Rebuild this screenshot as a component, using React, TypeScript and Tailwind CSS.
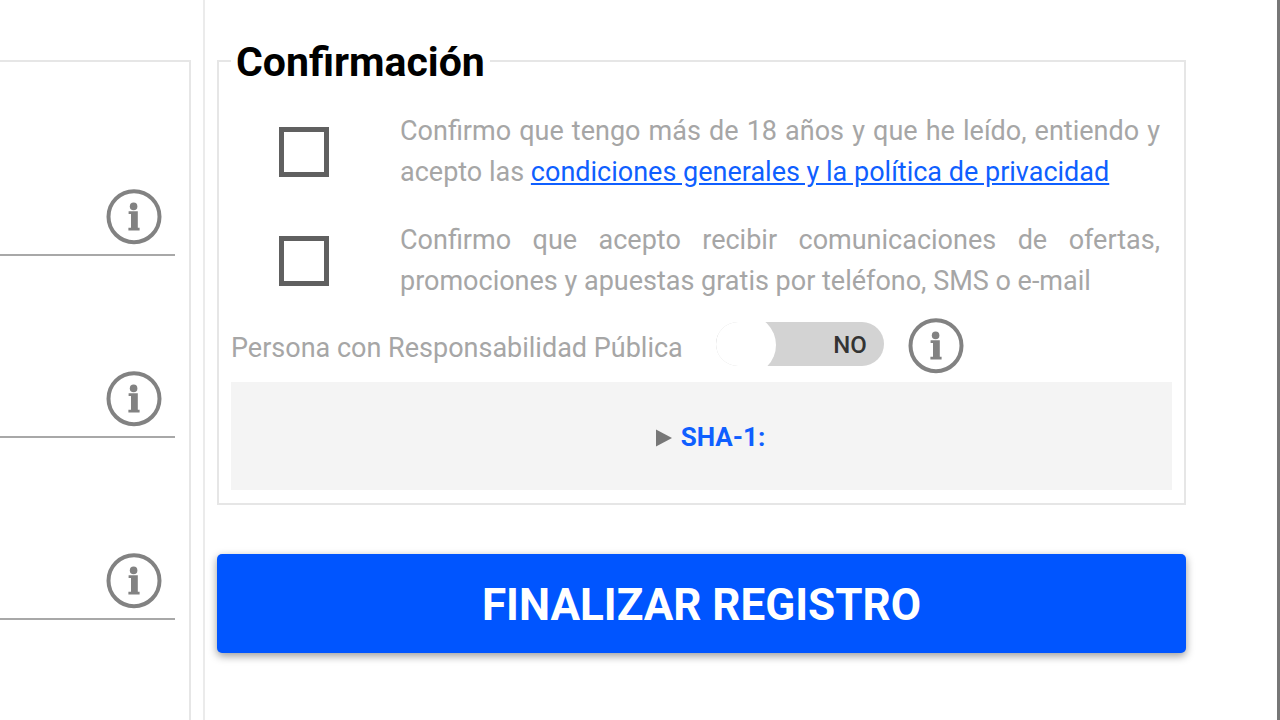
import React, { useState } from "react";

interface ConfirmCheckboxProps {
  id: string;
  children: React.ReactNode;
}

function InfoIcon() {
  return (
    <svg viewBox="0 0 56 56" className="block h-14 w-14" aria-hidden="true">
      <circle cx="28" cy="27.7" r="25.5" fill="none" stroke="#828282" strokeWidth="4" />
      <g fill="#828282">
        <circle cx="27.6" cy="17.4" r="3.8" />
        <path d="M22.6 22.2h9.2v16.6h1.8v2.8H22.4v-2.8h2.6V25h-2.4z" />
      </g>
    </svg>
  );
}

function FormField({ label }: { label: string }) {
  return (
    <div className="flex h-[182px] items-end border-b-2 border-[#a8a8a8] pb-[9px] pr-[13px]">
      <input type="text" aria-label={label} className="h-14 w-0 min-w-0 flex-1 outline-none" />
      <button type="button" aria-label={`Información: ${label}`}>
        <InfoIcon />
      </button>
    </div>
  );
}

function ConfirmCheckbox({ id, children }: ConfirmCheckboxProps) {
  return (
    <div className="flex items-center pl-12 pr-3">
      <input
        id={id}
        type="checkbox"
        className="h-[50px] w-[50px] shrink-0 appearance-none border-5 border-[#606060] checked:bg-[#606060]"
      />
      <label htmlFor={id} className="ml-[71px] flex-1 text-justify">
        {children}
      </label>
    </div>
  );
}

export default function App() {
  const [isPublic, setIsPublic] = useState(false);

  return (
    <div className="flex min-h-screen border-r-3 border-[#777777] bg-white font-['Roboto',sans-serif] text-[27px] leading-[41px] text-[#a6a6a6]">
      <div className="flex w-[203px] shrink-0 flex-col pr-3 pt-[60px]">
        <fieldset className="min-w-0 flex-1 border-r-2 border-t-2 border-[#e6e6e6] pr-[14px] pt-3">
          <FormField label="Usuario" />
          <FormField label="Contraseña" />
          <FormField label="Confirmar contraseña" />
        </fieldset>
      </div>

      <main className="min-w-0 flex-1 border-l-2 border-[#ebebeb] pl-3 pr-[91px] pt-9">
        <form onSubmit={(e) => e.preventDefault()}>
          <fieldset className="min-w-0 border-2 border-[#e6e6e6] px-3 pb-[13px]">
            <legend className="px-[5px] pt-[3px] text-[41px] font-bold leading-[46px] text-black">Confirmación</legend>

            <div className="flex flex-col gap-[27px] pt-[26px]">
              <ConfirmCheckbox id="terms">
                Confirmo que tengo más de 18 años y que he leído, entiendo y acepto las{" "}
                <a href="#condiciones" className="text-[#0f5fff] underline">
                  condiciones generales y la política de privacidad
                </a>
              </ConfirmCheckbox>
              <ConfirmCheckbox id="offers">
                Confirmo que acepto recibir comunicaciones de ofertas, promociones y apuestas gratis por teléfono, SMS o
                e-mail
              </ConfirmCheckbox>
            </div>

            <div className="mt-4 flex items-center">
              <span id="public-role" className="pt-1">
                Persona con Responsabilidad Pública
              </span>
              <button
                type="button"
                role="switch"
                aria-checked={isPublic}
                aria-labelledby="public-role"
                onClick={() => setIsPublic(!isPublic)}
                className="mb-1 ml-[33px] flex h-11 w-[168px] items-center justify-between overflow-hidden rounded-full bg-[#d3d3d3] pr-[17px] pt-[2px] text-[24px] font-medium text-[#333333]"
              >
                <span className="h-[60px] w-[60px] shrink-0 rounded-full bg-white" />
                {isPublic ? "SÍ" : "NO"}
              </button>
              <button type="button" aria-label="Información" className="ml-6">
                <InfoIcon />
              </button>
            </div>

            <details className="mt-2 bg-[#f4f4f4] pb-8 pt-[35px] text-center">
              <summary className="flex cursor-pointer list-none items-center justify-center gap-[9px] pl-[18px] text-[26px] font-bold text-[#0f5fff]">
                <svg viewBox="0 0 16 18" className="h-[18px] w-4" aria-hidden="true">
                  <path d="M0 0.5L16 9L0 17.5z" fill="#777777" />
                </svg>
                SHA-1:
              </summary>
            </details>
          </fieldset>

          <button
            type="submit"
            className="mt-[49px] h-[99px] w-full rounded-[5px] bg-[#0055ff] pt-1 text-[44px] font-bold text-white shadow-[0_3px_8px_rgba(0,0,0,0.4)]"
          >
            FINALIZAR REGISTRO
          </button>
        </form>
      </main>
    </div>
  );
}
